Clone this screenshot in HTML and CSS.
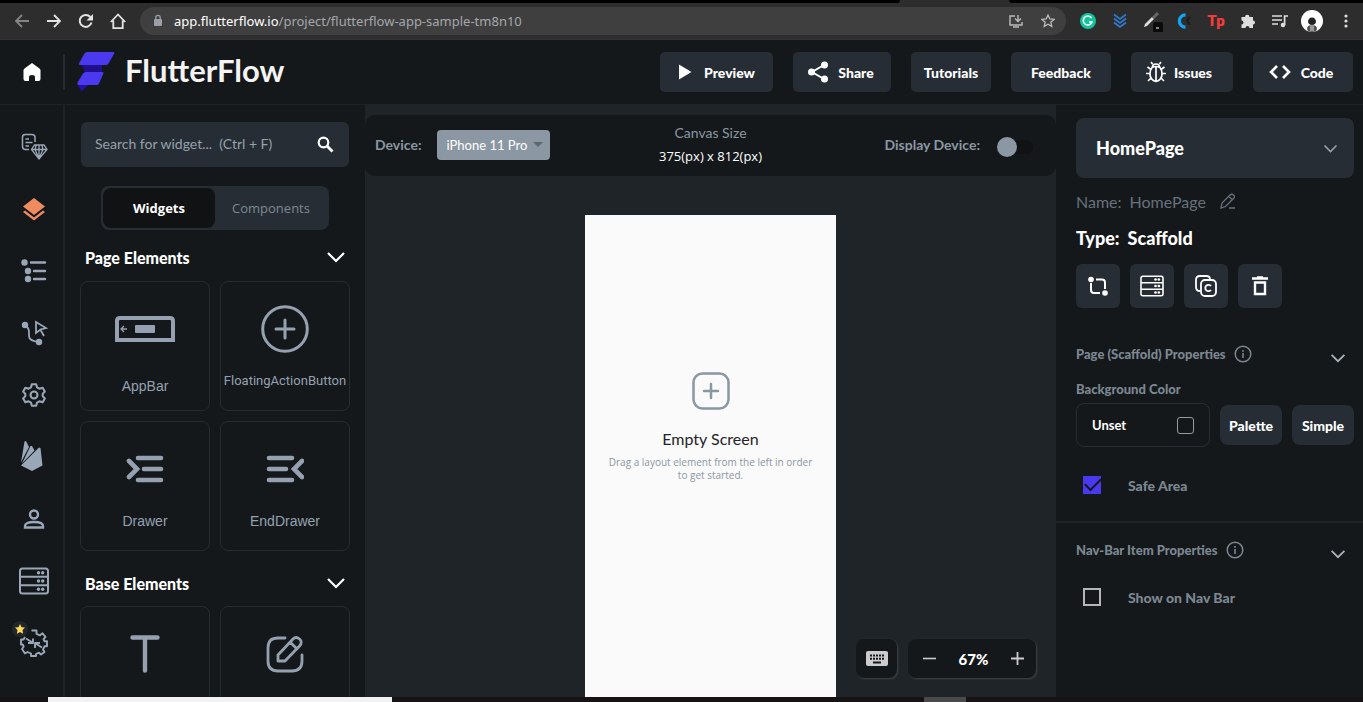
FILE: index.html
```html
<!DOCTYPE html>
<html lang="en">
<head>
<meta charset="utf-8">
<title>FlutterFlow</title>
<link rel="stylesheet" href="styles.css">
</head>
<body>
<svg class="defs" aria-hidden="true">
  <symbol id="chev" viewBox="0 0 20 20"><path d="M2 6l8 8 8-8" fill="none" stroke="currentColor" stroke-width="2.2"/></symbol>
  <symbol id="server" viewBox="0 0 30 28"><g fill="none" stroke="currentColor" stroke-width="2"><rect x="1" y="1.500" width="28" height="25" rx="2.500"/><path d="M1 9.800h28M1 18.200h28"/></g><g fill="currentColor"><circle cx="19.500" cy="5.700" r="1.700"/><circle cx="23.700" cy="5.700" r="1.700"/><circle cx="19.500" cy="14" r="1.700"/><circle cx="23.700" cy="14" r="1.700"/><circle cx="19.500" cy="22.300" r="1.700"/><circle cx="23.700" cy="22.300" r="1.700"/></g></symbol>
  <symbol id="info" viewBox="0 0 18 18"><circle cx="9" cy="9" r="7.800" fill="none" stroke="currentColor" stroke-width="1.500"/><path d="M9 8v5M9 5v1.700" stroke="currentColor" stroke-width="1.600"/></symbol>
</svg>

<div class="browser">
  <div class="tabstrip"><span></span><span></span></div>
  <div class="toolbar">
    <nav class="navs">
      <button aria-label="Back" class="dim"><svg width="16" height="16" viewBox="0 0 16 16"><path d="M15 8H2M8 2L2 8l6 6" fill="none" stroke="currentColor" stroke-width="1.800"/></svg></button>
      <button aria-label="Forward"><svg width="16" height="16" viewBox="0 0 16 16"><path d="M1 8h13M8 2l6 6-6 6" fill="none" stroke="currentColor" stroke-width="1.800"/></svg></button>
      <button aria-label="Reload"><svg width="16" height="16" viewBox="0 0 16 16"><path d="M13.500 9.500A6 6 0 1 1 12.300 4" fill="none" stroke="currentColor" stroke-width="2"/><path d="M15 1v6.500H8.500z" fill="currentColor"/></svg></button>
      <button aria-label="Home"><svg width="16" height="16" viewBox="0 0 16 16"><path d="M.8 9L8 1.500 15.200 9M3.300 7.500v7.600h9.400V7.500" fill="none" stroke="currentColor" stroke-width="1.800"/></svg></button>
    </nav>
    <div class="address">
      <svg width="10" height="14" viewBox="0 0 10 14"><rect x="1" y="5" width="8" height="7" rx="1" fill="#9aa0a6"/><path d="M2.800 5V3.500a2.200 2.200 0 0 1 4.400 0V5" fill="none" stroke="#9aa0a6" stroke-width="1.300"/></svg>
      <span class="url"><b>app.flutterflow.io</b>/project/flutterflow-app-sample-tm8n10</span>
      <button aria-label="Install"><svg width="14" height="14" viewBox="0 0 14 14" fill="none" stroke="currentColor" stroke-width="1.400"><path d="M6 2H1v9h12V8M4 13h6M9 1v6M6 4.500l3 3 3-3"/></svg></button>
      <button aria-label="Bookmark"><svg width="14" height="14" viewBox="0 0 14 14"><path d="M7 1l1.800 4 4.200.4-3.200 2.800 1 4.300L7 10.300l-3.800 2.200 1-4.300L1 5.400 5.200 5z" fill="none" stroke="currentColor" stroke-width="1.300"/></svg></button>
    </div>
    <div class="exts">
      <button aria-label="Grammar"><svg width="18" height="18" viewBox="0 0 18 18"><circle cx="9" cy="9" r="8" fill="#15c39a"/><path d="M12.500 6A4.500 4.500 0 1 0 13 10h-3" fill="none" stroke="#fff" stroke-width="1.500"/></svg></button>
      <button aria-label="Chevrons"><svg width="14" height="16" viewBox="0 0 14 16"><path d="M1 1.500L7 6l6-4.500M1 5.500L7 10l6-4.500M1 9.500L7 14l6-4.500" fill="none" stroke="#2f7bd0" stroke-width="1.700"/></svg></button>
      <button aria-label="Color picker"><svg width="22" height="22" viewBox="0 0 22 22"><path d="M3 17l1-3 7-7 2 2-7 7z" fill="#ddd"/><path d="M12 8l5-5" stroke="#666" stroke-width="3"/><rect x="12" y="12" width="10" height="12" rx="2" fill="#0b0b0b"/><path d="M15 18h3" stroke="#fff" stroke-width="1"/></svg></button>
      <button aria-label="C extension"><svg width="16" height="16" viewBox="0 0 16 16"><path d="M9.500 1.800A6.200 6.200 0 0 0 9.500 14.200" fill="none" stroke="#12a5f4" stroke-width="3.200"/><path d="M14 4L11 8l3 4" fill="none" stroke="#1b1b1b" stroke-width="1.800"/></svg></button>
      <button aria-label="Tp extension" class="tp">Tp</button>
      <button aria-label="Extensions"><svg width="16" height="16" viewBox="0 0 16 16"><path d="M5 4a2 2 0 1 1 4.500 0H13v3.500a2 2 0 1 1 0 4V15H9.500a2 2 0 1 0-4 0H1.500v-3.500a2 2 0 1 0 0-4V4z" fill="#ddd"/></svg></button>
      <button aria-label="Media"><svg width="17" height="14" viewBox="0 0 17 14"><path d="M0 2h10M0 6h10M0 10h6" stroke="#ddd" stroke-width="1.700"/><circle cx="11" cy="11" r="2.300" fill="#ddd"/><path d="M12.600 11V2H16" stroke="#ddd" stroke-width="1.700" fill="none"/></svg></button>
      <button aria-label="Profile"><svg width="22" height="22" viewBox="0 0 22 22"><circle cx="11" cy="11" r="11" fill="#fff"/><path d="M6 19q0-4 5-4t5 4l-1 2.200a11 11 0 0 1-8 0z" fill="#555"/><path d="M9 12h4v9H9z" fill="#999"/><path d="M7 12a4 4.500 0 1 1 8 0l-1 2-3 1-3-1z" fill="#222"/></svg></button>
      <button aria-label="Menu"><svg width="4" height="16" viewBox="0 0 4 16" fill="#ddd"><circle cx="2" cy="3" r="1.600"/><circle cx="2" cy="8" r="1.600"/><circle cx="2" cy="13" r="1.600"/></svg></button>
    </div>
  </div>
</div>

<header class="header">
  <a class="home" href="#" aria-label="Home"><svg width="18" height="18" viewBox="0 0 18 18"><path d="M9 0l7.500 5.500Q17.500 6.300 17.500 7.500V16q0 2-2 2H12v-4q0-2-3-2t-3 2v4H2.500q-2 0-2-2V7.500q0-1.200 1-2z" fill="#fff"/></svg></a>
  <a class="brand" href="#"><svg width="38" height="40" viewBox="0 0 38 40"><path d="M5 13h20l0 8H8z" fill="#1f0f8c"/><path d="M1 33h10l-6.500 6.500z" fill="#2410a5"/><path d="M10 0h26q2 0 1 2l-5.500 9.500q-1 1.500-3 1.500H2.500q-1-.3-.3-2L7.500 1.500Q8.500 0 10 0zM9 20h16q2 0 1.200 2L22 31.500Q21 33 19.500 33H1q-1-.5-.5-2.500L6 21.500Q7 20 9 20z" fill="#4b39ef"/></svg><span>FlutterFlow</span></a>
  <div class="actions">
    <button class="b-preview"><svg width="14" height="16" viewBox="0 0 14 16"><path d="M1 0.500L13.500 8 1 15.500z" fill="#fff"/></svg>Preview</button>
    <button class="b-share"><svg width="20" height="22" viewBox="0 0 20 22"><path d="M16 4L4 11l12 7" stroke="#fff" stroke-width="2" fill="none"/><g fill="#fff"><circle cx="16.500" cy="4" r="3.500"/><circle cx="3.500" cy="11" r="3.500"/><circle cx="16.500" cy="18" r="3.500"/></g></svg>Share</button>
    <button class="b-tut">Tutorials</button>
    <button class="b-feed">Feedback</button>
    <button class="b-issues"><svg width="20" height="22" viewBox="0 0 20 22" fill="none" stroke="#fff" stroke-width="1.700"><path d="M6 6.500Q10 4.500 14 6.500 16 9 16 13q0 6-6 7.500Q4 19 4 13 4 9 6 6.500zM6.500 6Q6.500 3 10 3t3.500 3M10 6v14M6.500 3L5 1M13.500 3L15 1M5 8.500L1.500 6M15 8.500L18.500 6M4.500 12.500H0M15.500 12.500H20M5.500 16.500L2 20M14.500 16.500L18 20"/></svg>Issues</button>
    <button class="b-code"><svg width="22" height="14" viewBox="0 0 22 14"><path d="M8 1L2 7l6 6M14 1l6 6-6 6" stroke="#fff" stroke-width="2.600" fill="none"/></svg>Code</button>
  </div>
</header>

<main class="main">
  <nav class="rail">
    <button aria-label="Pages"><svg width="28" height="28" viewBox="0 0 28 28" fill="none" stroke="currentColor" stroke-width="1.500"><path d="M9 16.500H5.500Q2.500 16.500 2.500 13.500V4Q2.500 1.500 5.500 1.500H12q3 0 3 3V9M5.500 6H9M5.500 9.500h7M5.500 13H9"/><path d="M14.500 12h9.500l3 4.500-8 9.500-7.500-9.500zM11.500 16.500H27M16 12.500l-1 4 4 9 4-9-1-4M19 12.500v13" stroke-width="1.300"/></svg></button>
    <button aria-label="Widgets" class="on"><svg width="24" height="26" viewBox="0 0 24 26" fill="currentColor"><path d="M12 2l11 8.500L12 19 1 10.500z"/><path d="M3 14.500l9 7 9-7 2 1.500-11 8.500L1 16z"/></svg></button>
    <button aria-label="Widget tree"><svg width="26" height="24" viewBox="0 0 26 24" fill="currentColor" stroke="currentColor" stroke-linecap="round" stroke-width="2.400"><g stroke="none"><circle cx="3.500" cy="3.500" r="3.200"/><circle cx="7" cy="12" r="3.200"/><circle cx="7" cy="20" r="3.200"/></g><path d="M10 3.500h14M13 12h11M13 20h11"/></svg></button>
    <button aria-label="Actions"><svg width="28" height="26" viewBox="0 0 28 26"><g fill="currentColor"><circle cx="5" cy="5" r="3.200"/><circle cx="19" cy="22" r="3.200"/></g><path d="M5 5q4 3 4 7v4q0 5 10 6M16 2l10 6-5.500 1.500L16 13zM20 9l4 7" fill="none" stroke="currentColor" stroke-width="1.800"/></svg></button>
    <button aria-label="Settings"><svg width="26" height="26" viewBox="0 0 24 24" fill="none" stroke="currentColor" stroke-width="1.900" stroke-linejoin="round"><circle cx="12" cy="12" r="3.200"/><path d="M10 2h4l.8 3 2.200 1.200L20 5.300l2 3.500-2 2.200v2l2 2.200-2 3.500-3-.9-2.200 1.200L14 22h-4l-.8-3L7 17.800l-3 .9-2-3.500L4 13v-2L2 8.800l2-3.500 3 .9L9.200 5z"/></svg></button>
    <button aria-label="Firebase" class="fire"><svg width="24" height="32" viewBox="0 0 24 32" fill="currentColor"><path d="M1 22.500L4.500 1.500l1.500-.5 3 6zM2 23.500L10.500 6h1.500l2.500 4.500zM1 25.500L19 7.500l1.500.5 2 17.500L12 31z"/></svg></button>
    <button aria-label="Users"><svg width="22" height="20" viewBox="0 0 22 20" fill="none" stroke="currentColor" stroke-width="2.400"><circle cx="11" cy="5.500" r="4"/><path d="M2 18.500V17q0-4 9-4t9 4v1.500z"/></svg></button>
    <button aria-label="Data"><svg width="30" height="28"><use href="#server"/></svg></button>
    <button aria-label="Integrations" class="integ"><svg width="28" height="28" viewBox="0 0 28 28" fill="none" stroke="currentColor" stroke-width="1.900" stroke-linejoin="round"><path d="M11.500 1.500h5v3.300l3.500 1.500 2.500-2 3 3.500-2 2.500 1 2h2.500v5h-2.500l-1.500 3.200 1.500 2.500-3.500 2.500-2-1.800-3 1.300v2h-5v-2.500l-3.500-1.500-2.500 1.500L2 20l1.700-2.500-1-2H1v-5h2.500L5 8"/><path d="M6 9.500l6.500 4M13 9.500V14H8M22 18.500l-6.500-4M15 19v-5h5"/></svg><span class="star"><svg width="10" height="10" viewBox="0 0 10 10"><path d="M5 0l1.500 3.200 3.500.4L7.500 6l.6 3.700L5 8 1.900 9.700 2.500 6 0 3.600l3.500-.4z" fill="#ffdc5c"/></svg></span></button>
  </nav>

  <section class="widgets">
    <label class="search"><input type="text" placeholder="Search for widget...  (Ctrl + F)" aria-label="Search for widget"><svg width="17" height="17" viewBox="0 0 17 17"><circle cx="6.500" cy="6.500" r="4.800" fill="none" stroke="#fff" stroke-width="2.200"/><path d="M10 10l5.500 5.500" stroke="#fff" stroke-width="2.800"/></svg></label>
    <div class="tabs"><button class="on">Widgets</button><button>Components</button></div>
    <h2>Page Elements <svg width="20" height="20"><use href="#chev"/></svg></h2>
    <div class="cards">
      <button class="card"><span class="pic"><svg width="62" height="26" viewBox="0 0 62 26"><path d="M3 24V5q0-3 3-3h50q3 0 3 3v19z" fill="none" stroke="currentColor" stroke-width="4"/><rect x="21" y="9" width="20" height="8" rx="1" fill="currentColor"/><path d="M13 13H7M10 10l-3 3 3 3" stroke="currentColor" fill="none" stroke-width="1.300"/></svg></span>AppBar</button>
      <button class="card small"><span class="pic"><svg width="48" height="48" viewBox="0 0 48 48" fill="none" stroke="currentColor" stroke-width="3"><circle cx="24" cy="24" r="22.300"/><path d="M24 15v18M15 24h18" stroke-linecap="round"/></svg></span>FloatingActionButton</button>
      <button class="card low"><span class="pic"><svg width="38" height="28" viewBox="0 0 38 28" fill="none" stroke="currentColor" stroke-width="4.600" stroke-linecap="round"><path d="M12 3h23M18 14h17M12 25h23M3 6l8 8-8 8"/></svg></span>Drawer</button>
      <button class="card low"><span class="pic"><svg width="38" height="28" viewBox="0 0 38 28" fill="none" stroke="currentColor" stroke-width="4.600" stroke-linecap="round"><path d="M3 3h23M3 14h17M3 25h23M36 6l-8 8 8 8"/></svg></span>EndDrawer</button>
    </div>
    <h2>Base Elements <svg width="20" height="20"><use href="#chev"/></svg></h2>
    <div class="cards">
      <button class="card" aria-label="Text"><span class="pic"><svg width="30" height="38" viewBox="0 0 30 38" fill="none" stroke="currentColor" stroke-width="4.400" stroke-linecap="round"><path d="M2.500 2.500h25M15 3v32.500"/></svg></span></button>
      <button class="card" aria-label="Button"><span class="pic"><svg width="38" height="38" viewBox="0 0 38 38" fill="none" stroke="currentColor" stroke-width="2.800" stroke-linecap="round" stroke-linejoin="round"><path d="M19 3h-7Q2 3 2 13v13q0 10 10 10h14q10 0 10-10v-6M12 26v-6L27 4q3-3 6.500 0t0 7L19 26zM24 7l7 7"/></svg></span></button>
    </div>
  </section>

  <section class="canvas">
    <div class="devicebar">
      <div class="side"><label for="device">Device:</label><span class="pick"><select id="device"><option>iPhone 11 Pro</option></select><svg width="10" height="5" viewBox="0 0 10 5"><path d="M0 0h10L5 5z" fill="#5f666d"/></svg></span></div>
      <div class="size"><span>Canvas Size</span><strong>375(px) x 812(px)</strong></div>
      <div class="side end"><label for="disp">Display Device:</label><input type="checkbox" id="disp" class="switch"></div>
    </div>
    <div class="phone">
      <svg width="38" height="38" viewBox="0 0 38 38" fill="none" stroke="#8b97a2" stroke-width="2.500"><rect x="1.500" y="1.500" width="35" height="35" rx="9"/><path d="M19 12v14M12 19h14" stroke-linecap="round"/></svg>
      <h1>Empty Screen</h1>
      <p>Drag a layout element from the left in order to get started.</p>
    </div>
    <div class="float">
      <button class="kbd" aria-label="Keyboard shortcuts"><svg width="22" height="15" viewBox="0 0 22 15"><rect width="22" height="15" rx="2" fill="#ccc"/><path d="M4 4.500h15M4 7.800h15" stroke="#14181b" stroke-width="2" stroke-dasharray="2 1"/><path d="M7 11.500h8" stroke="#14181b" stroke-width="2"/></svg></button>
      <div class="zoom"><button aria-label="Zoom out"><svg width="13" height="13"><path d="M0 6.500h13" stroke="#ccc" stroke-width="1.600"/></svg></button><strong>67%</strong><button aria-label="Zoom in"><svg width="13" height="13"><path d="M0 6.500h13M6.500 0v13" stroke="#ccc" stroke-width="1.800"/></svg></button></div>
    </div>
  </section>

  <aside class="props">
    <div class="page"><select aria-label="Page"><option>HomePage</option></select><svg width="15" height="15"><use href="#chev"/></svg></div>
    <div class="name"><span>Name:</span><span>HomePage</span><button aria-label="Rename"><svg width="16" height="16" viewBox="0 0 16 16" fill="none" stroke="currentColor" stroke-width="1.300"><path d="M1 15l1-5 8-8q1.500-1.500 3.500 0t0 3.500l-8 8zM9 3.500l3.500 3.500M9 15h6"/></svg></button></div>
    <div class="type"><span>Type:</span><span>Scaffold</span></div>
    <div class="tools">
      <button aria-label="Wrap"><svg width="20" height="20" viewBox="0 0 20 20" fill="none" stroke="#fff" stroke-width="2"><path d="M8 3.500h6q3 0 3 3V13M3 7v7q0 3 3 3h6"/><g fill="#fff" stroke="none"><circle cx="3" cy="3.500" r="2.800"/><circle cx="17" cy="17" r="2.800"/></g></svg></button>
      <button aria-label="Data"><svg width="24" height="22"><use href="#server"/></svg></button>
      <button aria-label="Copy"><svg width="22" height="22" viewBox="0 0 22 22" fill="none" stroke="#fff" stroke-width="1.800"><rect x="6" y="5" width="15" height="16" rx="4"/><path d="M5 16Q1 16 1 12V5q0-4 4-4h6q4 0 4 3"/><path d="M16 11a3.200 3.200 0 1 0 0 4"/></svg></button>
      <button aria-label="Delete"><svg width="16" height="20" viewBox="0 0 16 20" fill="none" stroke="#fff" stroke-width="2.400"><path d="M3 6.500h10V18H3zM0 2.500h16M5 1.500h6"/></svg></button>
    </div>
    <section class="group">
      <h3>Page (Scaffold) Properties <svg width="18" height="18"><use href="#info"/></svg><svg class="c" width="16" height="16"><use href="#chev"/></svg></h3>
      <h4>Background Color</h4>
      <div class="colors"><button class="unset">Unset<i></i></button><button>Palette</button><button>Simple</button></div>
      <label class="check"><input type="checkbox" checked>Safe Area</label>
    </section>
    <section class="group second">
      <h3>Nav-Bar Item Properties <svg width="18" height="18"><use href="#info"/></svg><svg class="c" width="16" height="16"><use href="#chev"/></svg></h3>
      <label class="check"><input type="checkbox">Show on Nav Bar</label>
    </section>
  </aside>
</main>
<footer class="taskbar"><span class="white"></span><span class="grey"></span></footer>
</body>
</html>
```

FILE: styles.css
```css
* { box-sizing: border-box; }
body { margin: 0; height: 100vh; display: flex; flex-direction: column; overflow: hidden; background: #14181b; color: #fff; font: 14px "Lato", sans-serif; }
button { font: inherit; color: inherit; background: none; border: 0; padding: 0; display: flex; align-items: center; justify-content: center; }
svg { display: block; flex: none; }
.defs { position: absolute; width: 0; height: 0; }
h1, h2, h3, h4, p { margin: 0; }

.browser { background: #2d2d2d; border-bottom: 1px solid #343434; flex: none; }
.tabstrip { display: flex; justify-content: space-between; height: 3px; }
.tabstrip span { background: #000; width: 26%; border-bottom-left-radius: 3px; }
.tabstrip span:first-child { width: 66%; border-radius: 0 0 3px 0; }
.toolbar { display: flex; align-items: center; height: 36px; padding-right: 14px; }
.navs { display: flex; gap: 16px; padding-left: 14px; color: #e4e4e4; }
.navs .dim { color: #858585; }
.address { flex: 1; display: flex; align-items: center; gap: 18px; margin-left: 14px; height: 28px; padding: 0 11px 0 13px; border-radius: 14px; background: #3f3f3f; color: #bbb; }
.url { flex: 1; margin-left: -7px; font: 13px "Noto Sans", sans-serif; color: #a4a8ac; }
.url b { font-weight: 400; color: #fff; }
.exts { display: flex; align-items: center; margin-left: 6px; }
.exts button { width: 32px; height: 22px; }
.exts button:last-child { width: 20px; margin-left: 8px; margin-right: -7px; }
.exts .tp { font: 900 15px "Roboto", sans-serif; color: #f43b3b; }

.header { display: flex; align-items: center; height: 65px; flex: none; border-bottom: 1px solid #1e2327; padding-right: 10px; }
.home { width: 65px; height: 36px; display: flex; align-items: center; justify-content: center; border-right: 2px solid #262d34; }
.brand { display: flex; align-items: center; gap: 10px; margin-left: 12px; color: #f4f4f4; text-decoration: none; font: 700 31px/36px "Lato", sans-serif; }
.brand span { padding-bottom: 4px; }
.actions { display: flex; gap: 20px; margin-left: auto; font-weight: 900; }
.actions button { height: 40px; background: #262d34; border-radius: 5px; gap: 10px; }
.actions .b-preview { width: 113px; gap: 12px; }
.actions .b-share { width: 98px; padding-right: 2px; }
.b-tut { width: 80px; }
.b-feed { width: 100px; }
.actions .b-issues { width: 102px; padding-right: 6px; gap: 8px; }
.actions .b-code { width: 100px; padding-right: 4px; }

.main { flex: 1; min-height: 0; display: grid; grid-template-columns: 65px 300px 1fr 307px; }
.rail { border-right: 2px solid #1e2327; padding: 11px 0 0 4px; color: #9aa7b8; overflow: hidden; }
.rail button { width: 100%; height: 62px; position: relative; }
.rail .on { color: #ee8b60; }
.rail .fire { padding: 0 4px 2px 0; }
.star { position: absolute; left: 8px; top: 9px; width: 16px; height: 16px; border-radius: 50%; background: #22272c; display: flex; align-items: center; justify-content: center; }

.widgets { padding: 17px 15px 0; overflow: hidden; }
.search { display: flex; align-items: center; height: 45px; margin: 0 1px; padding: 0 15px 0 14px; background: #262d34; border-radius: 6px; }
.search input { flex: 1; min-width: 0; background: none; border: 0; padding: 0 0 2px; color: #fff; font: 14px "Lato", sans-serif; white-space: pre; }
.search input::placeholder { color: #95a1ac; }
.tabs { display: flex; margin: 19px 21px 0; height: 44px; padding: 2px; background: #262d34; border-radius: 8px; }
.tabs button { flex: 1; color: #7d8993; font: 13px "Open Sans", sans-serif; }
.tabs .on { background: #101213; color: #fff; border-radius: 8px; font-weight: 700; }
.widgets h2 { display: flex; align-items: center; justify-content: space-between; height: 56px; padding: 0 4px 2px 5px; font: 900 16px "Lato", sans-serif; }
.cards + h2 { height: 60px; padding-top: 6px; }
.cards { display: grid; grid-template-columns: 1fr 1fr; gap: 10px; margin-top: -5px; }
.card { height: 130px; border: 1px solid #262b30; border-radius: 8px; flex-direction: column; justify-content: flex-start; color: #95a1b0; font: 14px "Liberation Sans", sans-serif; }
.pic { height: 94px; display: flex; align-items: center; margin-bottom: 2px; }
.low .pic { margin-bottom: -3px; }
.small { font: 13px "Roboto", sans-serif; }
.small .pic { margin-bottom: -3px; }

.canvas { background: #1f2428; padding-top: 10px; display: flex; flex-direction: column; align-items: center; position: relative; overflow: hidden; }
.devicebar { align-self: stretch; flex: none; display: grid; grid-template-columns: 1fr auto 1fr; align-items: center; height: 61px; padding: 0 10px; border-radius: 10px; background: #14181b; color: #8b97a2; font-weight: 700; }
.side { display: flex; align-items: center; gap: 15px; padding-bottom: 2px; }
.end { justify-content: flex-end; padding-right: 13px; }
.pick, .page { display: grid; align-items: center; }
.pick > *, .page > * { grid-area: 1 / 1; }
.pick svg { justify-self: end; margin-right: 7px; pointer-events: none; }
select { appearance: none; border: 0; font: inherit; color: #fff; }
.pick select { height: 30px; width: 113px; padding: 0 10px; border-radius: 4px; background: #8b97a2; font: 13px "Lato", sans-serif; }
.size { display: flex; flex-direction: column; align-items: center; gap: 6px; font-weight: 400; padding-bottom: 2px; }
.size strong { color: #fff; font: 500 13px "Open Sans", sans-serif; }
.switch { appearance: none; width: 36px; height: 14px; margin: 4px 0 0 2px; border-radius: 7px; background: #101213; display: flex; align-items: center; }
.switch::before { content: ""; width: 20px; height: 20px; border-radius: 50%; background: #8b97a2; }
.phone { flex: 1; width: 251px; margin-top: 39px; padding: 157px 20px 0; background: #fafafa; display: flex; flex-direction: column; align-items: center; text-align: center; }
.phone h1 { margin-top: 20px; color: #1f2428; font: 16px/18px "Lato", sans-serif; }
.phone p { margin-top: 8px; color: #8b97a2; font: 10px/13px "Open Sans", sans-serif; }
.float { position: absolute; right: 20px; bottom: 19px; display: flex; gap: 11px; }
.float > * { height: 39px; background: #14181b; border-radius: 8px; box-shadow: 1px 1px 2px #444; }
.kbd { width: 41px; }
.zoom { width: 128px; padding: 0 12px 0 15px; display: flex; align-items: center; justify-content: space-between; font: 15px "Lato", sans-serif; }
.zoom strong { font-weight: 900; }

.props { padding: 13px 9px 0 20px; overflow: hidden; }
.page select { height: 60px; width: 100%; padding: 0 20px; background: #262d34; border-radius: 8px; font: 900 18px "Lato", sans-serif; }
.page svg { justify-self: end; margin-right: 16px; color: #95a1ac; pointer-events: none; }
.name, .type { display: flex; align-items: center; gap: 8px; }
.name { margin-top: 12px; height: 22px; color: #67717b; font-size: 16px; }
.name button { margin-left: 6px; }
.type { margin-top: 14px; height: 24px; font-size: 18px; font-weight: 900; }
.tools { display: flex; gap: 10px; margin-top: 14px; }
.tools button { width: 44px; height: 44px; background: #262d34; border-radius: 6px; }
.group { margin-right: -9px; padding-right: 9px; color: #7c8791; font-weight: 900; }
.group h3 { display: flex; align-items: center; gap: 8px; font-size: 13px; font-weight: 900; height: 24px; margin-top: 34px; }
.group .c { margin: 8px 8px 0 auto; color: #aab4bd; }
.group h4 { font-size: 13px; font-weight: 900; line-height: 16px; margin-top: 15px; }
.colors { display: flex; align-items: center; gap: 10px; margin-top: 6px; color: #fff; }
.colors button { width: 62px; height: 40px; border-radius: 8px; background: #262d34; }
.colors .unset { flex: 1; width: auto; height: 44px; padding: 0 15px; justify-content: space-between; background: none; border: 1px solid #262d34; font-size: 13px; font-weight: 700; }
.unset i { width: 17px; height: 17px; border: 1px solid #999; border-radius: 3px; }
.check { display: flex; align-items: center; gap: 27px; margin-top: 28px; padding-left: 7px; height: 20px; }
.check input { appearance: none; margin: 0; width: 18px; height: 18px; border: 2px solid #b5b5b5; display: grid; place-items: center; }
.check input:checked { background: #4b39ef; border-color: #4b39ef; }
.check input:checked::before { content: ""; width: 14px; height: 7px; margin-top: -5px; border: solid #14181b; border-width: 0 0 2px 2px; transform: rotate(-45deg); }
.second { margin-left: -20px; padding-left: 20px; margin-top: 26px; border-top: 2px solid #1e2327; }
.second h3 { margin-top: 15px; }
.second .check { margin-top: 25px; }

.taskbar { height: 5px; flex: none; background: #171314; display: flex; }
.white { width: 344px; margin-left: 48px; background: #f2f2f2; }
.grey { width: 42px; margin-left: 532px; background: #4a4a4a; }
```
